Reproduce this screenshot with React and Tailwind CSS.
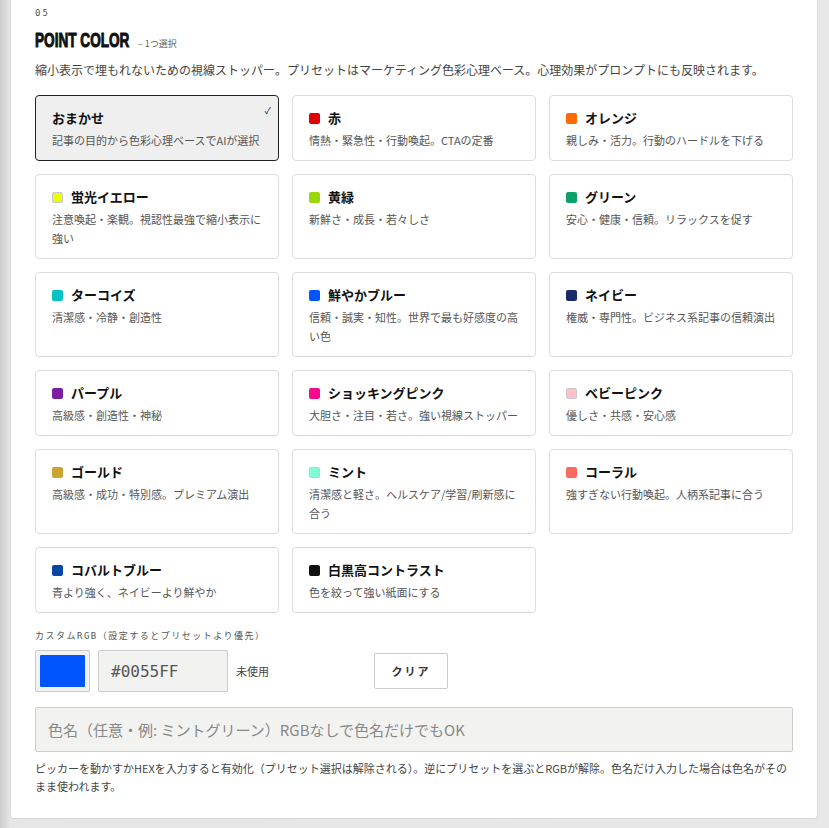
import React, { useState } from "react";

const PRESETS = [
  { id: "auto", name: "おまかせ", desc: "記事の目的から色彩心理ベースでAIが選択" },
  { id: "red", name: "赤", color: "#e00000", desc: "情熱・緊急性・行動喚起。CTAの定番" },
  { id: "orange", name: "オレンジ", color: "#ff6a00", desc: "親しみ・活力。行動のハードルを下げる" },
  { id: "yellow", name: "蛍光イエロー", color: "#eaff00", desc: "注意喚起・楽観。視認性最強で縮小表示に強い", edge: true },
  { id: "yellowgreen", name: "黄緑", color: "#9ad80e", desc: "新鮮さ・成長・若々しさ" },
  { id: "green", name: "グリーン", color: "#0ca06b", desc: "安心・健康・信頼。リラックスを促す" },
  { id: "turquoise", name: "ターコイズ", color: "#00c4c4", desc: "清潔感・冷静・創造性" },
  { id: "blue", name: "鮮やかブルー", color: "#0055ff", desc: "信頼・誠実・知性。世界で最も好感度の高い色" },
  { id: "navy", name: "ネイビー", color: "#1b2a6b", desc: "権威・専門性。ビジネス系記事の信頼演出" },
  { id: "purple", name: "パープル", color: "#7b1fa2", desc: "高級感・創造性・神秘" },
  { id: "pink", name: "ショッキングピンク", color: "#f50a8c", desc: "大胆さ・注目・若さ。強い視線ストッパー" },
  { id: "babypink", name: "ベビーピンク", color: "#ffc2cc", desc: "優しさ・共感・安心感", edge: true },
  { id: "gold", name: "ゴールド", color: "#c9a530", desc: "高級感・成功・特別感。プレミアム演出" },
  { id: "mint", name: "ミント", color: "#7fffd4", desc: "清潔感と軽さ。ヘルスケア/学習/刷新感に合う", edge: true },
  { id: "coral", name: "コーラル", color: "#f86b5e", desc: "強すぎない行動喚起。人柄系記事に合う" },
  { id: "cobalt", name: "コバルトブルー", color: "#0747a8", desc: "青より強く、ネイビーより鮮やか" },
  { id: "mono", name: "白黒高コントラスト", color: "#111111", desc: "色を絞って強い紙面にする" },
];

function PresetCard({ preset, selected, onSelect }) {
  return (
    <button
      type="button"
      onClick={() => onSelect(preset.id)}
      className={
        selected
          ? "relative flex flex-col items-start rounded-[4px] border border-[#222] bg-[#efefef] px-4 pt-[13px] pb-[10px] text-left"
          : "relative flex flex-col items-start rounded-[4px] border border-[#dcdcdc] bg-white px-4 pt-[13px] pb-[10px] text-left"
      }
    >
      <div className="flex items-center gap-2 text-[13px] font-bold leading-[18px] text-[#111]">
        {preset.color && (
          <span
            className={
              preset.edge
                ? "h-[11px] w-[11px] shrink-0 rounded-[2px] border border-[#c8c8c8]"
                : "h-[11px] w-[11px] shrink-0 rounded-[2px]"
            }
            style={{ backgroundColor: preset.color }}
          />
        )}
        <span>{preset.name}</span>
      </div>
      <p className="mt-1 text-[11px] leading-[19px] text-[#555]">{preset.desc}</p>
      {selected && (
        <span className="absolute right-[7px] top-[10px] text-[9px] leading-none text-[#222]">✓</span>
      )}
    </button>
  );
}

export default function App() {
  const [selected, setSelected] = useState("auto");
  const [hex, setHex] = useState("#0055FF");
  const [colorName, setColorName] = useState("");

  return (
    <div
      className="min-h-[828px] w-full bg-[linear-gradient(to_right,#cdcdcd,#e6e6e6_10px,#e8e8e8)] pb-[11px] pl-[10px] pr-[11px]"
      style={{ fontFamily: '"Noto Sans CJK JP", "Noto Sans", sans-serif' }}
    >
      <section className="rounded-b-[4px] border border-t-0 border-[#dadada] bg-white px-6 pt-[7px] pb-[23px]">
        <div className="font-['DejaVu_Sans_Mono',monospace] text-[9px] leading-[12px] tracking-[2px] text-[#555]">
          05
        </div>

        <div className="mt-[9px] flex items-baseline gap-2">
          <h2 className="w-[95px] shrink-0 whitespace-nowrap font-['Liberation_Sans',Arial,sans-serif] text-[20px] font-bold leading-[24px] text-[#111]">
            <span className="inline-block origin-left scale-x-[0.68] [-webkit-text-stroke:1px_#111]">POINT COLOR</span>
          </h2>
          <span className="text-[9px] text-[#666]">– 1つ選択</span>
        </div>

        <p className="mt-[9px] text-[12px] leading-[18px] text-[#444]">
          縮小表示で埋もれないための視線ストッパー。プリセットはマーケティング色彩心理ベース。心理効果がプロンプトにも反映されます。
        </p>

        <div className="mt-4 grid grid-cols-3 gap-[13px]">
          {PRESETS.map((p) => (
            <PresetCard key={p.id} preset={p} selected={selected === p.id} onSelect={setSelected} />
          ))}
        </div>

        <div className="mt-4 font-['DejaVu_Sans_Mono','Noto_Sans_CJK_JP',monospace] text-[9px] leading-[14px] tracking-[1.5px] text-[#555]">
          カスタムRGB（設定するとプリセットより優先）
        </div>

        <div className="mt-[7px] flex items-center">
          <div className="flex h-[42px] w-[55px] items-center justify-center rounded-[2px] border border-[#c9c9c9] bg-[#f2f2f2] p-[4px]">
            <div className="h-full w-full rounded-[1px] bg-[#0055ff]" />
          </div>
          <input
            value={hex}
            onChange={(e) => setHex(e.target.value)}
            className="ml-2 h-[42px] w-[130px] rounded-[2px] border border-[#cccccc] bg-[#f2f2f1] px-3 font-['DejaVu_Sans_Mono',monospace] text-[16px] text-[#555] outline-none"
          />
          <span className="ml-2 w-[138px] text-[11px] text-[#444]">未使用</span>
          <button
            type="button"
            className="h-[36px] w-[74px] rounded-[2px] border border-[#cccccc] bg-white text-[11px] font-bold tracking-[2px] text-[#333]"
          >
            クリア
          </button>
        </div>

        <input
          value={colorName}
          onChange={(e) => setColorName(e.target.value)}
          placeholder="色名（任意・例: ミントグリーン）RGBなしで色名だけでもOK"
          className="mt-[15px] h-[45px] w-full rounded-[2px] border border-[#cccccc] bg-[#f2f2f1] px-3 text-[15px] text-[#333] outline-none placeholder:text-[#888]"
        />

        <p className="mt-[7px] text-[11px] leading-[18px] text-[#444]">
          ピッカーを動かすかHEXを入力すると有効化（プリセット選択は解除される）。逆にプリセットを選ぶとRGBが解除。色名だけ入力した場合は色名がそのまま使われます。
        </p>
      </section>
    </div>
  );
}
